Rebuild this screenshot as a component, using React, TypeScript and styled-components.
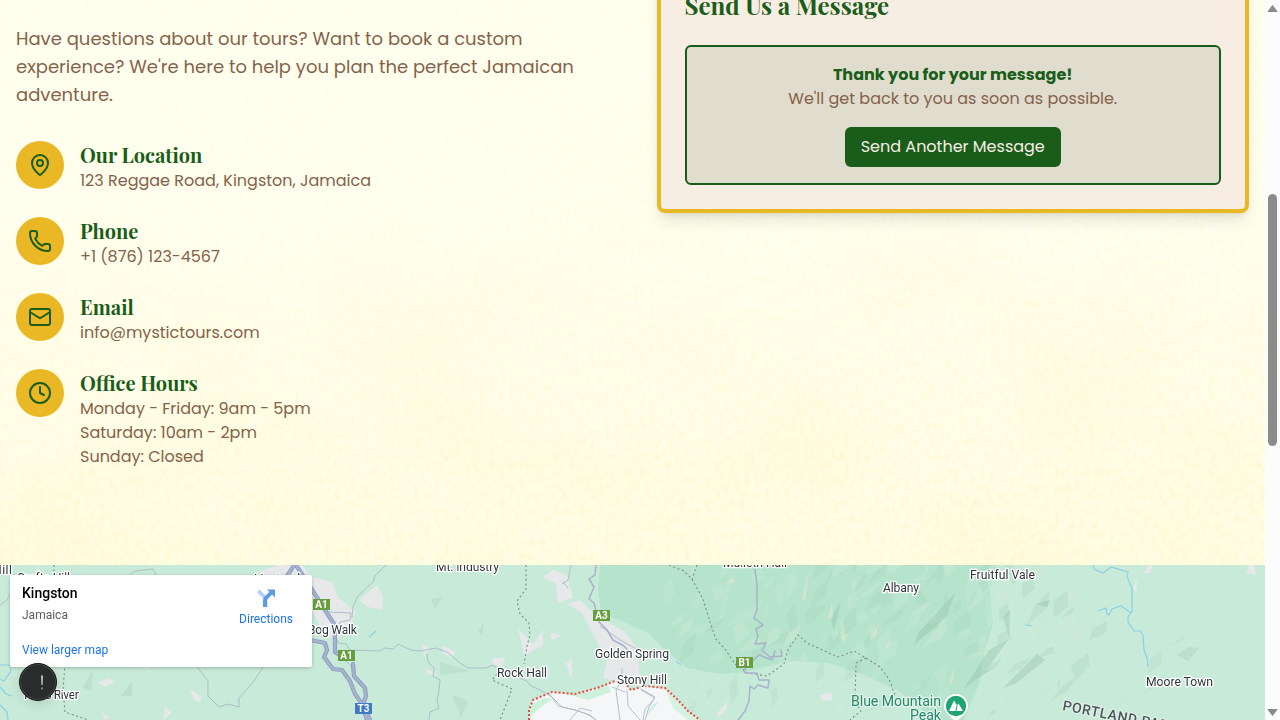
import React from "react";
import styled, { createGlobalStyle } from "styled-components";
import { Clock, Mail, MapPin, Phone } from "lucide-react";

const colors = {
  green: "#1a5d1a",
  gold: "#e9b824",
  brown: "#85624a",
  sand: "#f7ede3",
};

const GlobalStyle = createGlobalStyle`
  * { box-sizing: border-box; }
  body {
    margin: 0;
    overflow: hidden;
    font-family: Poppins, Inter, sans-serif;
    font-size: 16px;
    line-height: 24px;
    color: ${colors.brown};
  }
`;

const Window = styled.div`
  display: flex;
  width: 1280px;
  height: 720px;
  overflow: hidden;
`;

const Page = styled.main`
  display: flex;
  flex-direction: column;
  width: 1265px;
`;

const ContactSection = styled.section`
  position: relative;
  height: 565px;
  flex: none;
  padding: 0 16px;
  overflow: hidden;
  background: #fffff0;
`;

const Texture = styled.svg`
  position: absolute;
  inset: 0;
  width: 100%;
  height: 100%;
`;

const Columns = styled.div`
  position: relative;
  display: grid;
  grid-template-columns: 1fr 1fr;
  gap: 48px;
  align-items: start;
`;

const Details = styled.div`
  padding-top: 25px;
`;

const Intro = styled.p`
  margin: 0 0 32px;
  font-size: 18px;
  line-height: 28px;
`;

const Line = styled.span`
  display: block;
  white-space: nowrap;
`;

const ContactList = styled.div`
  display: flex;
  flex-direction: column;
  gap: 24px;
`;

const ContactItem = styled.div`
  display: flex;
  align-items: flex-start;
  gap: 16px;
`;

const IconDisc = styled.div`
  display: flex;
  align-items: center;
  justify-content: center;
  width: 48px;
  height: 48px;
  border-radius: 50%;
  background: ${colors.gold};
  color: ${colors.green};
`;

const ItemTitle = styled.h3`
  margin: 0;
  font-family: "Playfair Display", "Liberation Serif", serif;
  font-size: 20px;
  font-weight: 700;
  line-height: 28px;
  color: ${colors.green};
`;

const MessageCard = styled.div`
  margin-top: -39px;
  padding: 24px;
  border: 4px solid ${colors.gold};
  border-radius: 8px;
  background: ${colors.sand};
  box-shadow: 0 10px 15px -3px rgba(0, 0, 0, 0.1), 0 4px 6px -4px rgba(0, 0, 0, 0.1);
`;

const CardTitle = styled.h2`
  margin: 0 0 24px;
  font-family: "Playfair Display", "Liberation Serif", serif;
  font-size: 24px;
  font-weight: 700;
  line-height: 32px;
  color: ${colors.green};
`;

const Confirmation = styled.div`
  display: flex;
  flex-direction: column;
  align-items: center;
  padding: 16px;
  border: 2px solid ${colors.green};
  border-radius: 6px;
  background: rgba(26, 93, 26, 0.1);
`;

const Thanks = styled(Line)`
  font-weight: 700;
  color: ${colors.green};
`;

const SendButton = styled.button`
  height: 40px;
  margin-top: 16px;
  padding: 0 16px;
  border: 0;
  border-radius: 6px;
  background: ${colors.green};
  color: ${colors.sand};
  font: inherit;
`;

const MapSection = styled.section`
  position: relative;
  height: 155px;
  overflow: hidden;
  font-family: Roboto, sans-serif;
`;

const MapCanvas = styled.svg`
  display: block;
  font-family: Roboto, sans-serif;
`;

const PlaceCard = styled.div`
  position: absolute;
  left: 10px;
  top: 10px;
  display: flex;
  justify-content: space-between;
  width: 302px;
  height: 92px;
  padding: 9px 19px 9px 12px;
  border-radius: 2px;
  background: #fff;
  box-shadow: 0 1px 4px -1px rgba(0, 0, 0, 0.35);
`;

const PlaceText = styled.div`
  display: flex;
  flex-direction: column;
`;

const PlaceName = styled.div`
  font-size: 14px;
  font-weight: 500;
  line-height: 18px;
  color: #000;
`;

const PlaceRegion = styled.div`
  margin-top: 5px;
  font-size: 12px;
  line-height: 16px;
  color: #5b5b5b;
`;

const MapLink = styled.a`
  font-size: 12px;
  line-height: 16px;
  color: #1a73e8;
`;

const LargerMapLink = styled(MapLink)`
  margin-top: auto;
`;

const Directions = styled.div`
  display: flex;
  flex-direction: column;
  align-items: center;
  gap: 4px;
  padding-top: 5px;
`;

const AlertBubble = styled.div`
  position: absolute;
  left: 19px;
  top: 98px;
  display: flex;
  align-items: center;
  justify-content: center;
  width: 38px;
  height: 38px;
  padding-left: 8px;
  border: 1.5px solid #141615;
  border-radius: 50%;
  background: #292c2b;
  box-shadow: inset 0 0 0 1px #454847, 0 3px 12px rgba(0, 0, 0, 0.12);
`;

const Scrollbar = styled.div`
  display: flex;
  flex-direction: column;
  align-items: center;
  justify-content: space-between;
  width: 15px;
  height: 720px;
  padding: 5px 0 4px;
  background: #fcfcfc;
`;

const ScrollTrack = styled.div`
  flex: 1;
  padding-top: 182px;
`;

const ScrollThumb = styled.div`
  width: 9px;
  height: 252px;
  border-radius: 5px;
  background: #8b8b8b;
`;

const contacts = [
  { title: "Our Location", icon: MapPin, lines: ["123 Reggae Road, Kingston, Jamaica"] },
  { title: "Phone", icon: Phone, lines: ["+1 (876) 123-4567"] },
  { title: "Email", icon: Mail, lines: ["info@mystictours.com"] },
  {
    title: "Office Hours",
    icon: Clock,
    lines: ["Monday - Friday: 9am - 5pm", "Saturday: 10am - 2pm", "Sunday: Closed"],
  },
];

const PaperTexture = () => (
  <Texture aria-hidden="true">
    <defs>
      <filter id="grain" x="0" y="0" width="100%" height="100%" colorInterpolationFilters="sRGB">
        <feTurbulence type="fractalNoise" baseFrequency="0.2 0.13" numOctaves="3" seed="8" />
        <feColorMatrix values="0 0 0 0 0.98  0 0 0 0 0.93  0 0 0 0 0.66  1.5 0 0 0 -0.6" />
      </filter>
      <filter id="clouds" x="0" y="0" width="100%" height="100%" colorInterpolationFilters="sRGB">
        <feTurbulence type="fractalNoise" baseFrequency="0.006 0.008" numOctaves="3" seed="21" />
        <feColorMatrix values="0 0 0 0 0.99  0 0 0 0 0.96  0 0 0 0 0.75  1.5 0 0 0 -0.62" />
      </filter>
      <linearGradient id="fade" x1="0" y1="0" x2="0.2" y2="1">
        <stop offset="0" stopColor="#fff" stopOpacity="0.3" />
        <stop offset="0.4" stopColor="#fff" stopOpacity="0.4" />
        <stop offset="1" stopColor="#fff" stopOpacity="1" />
      </linearGradient>
      <linearGradient id="warm" x1="0" y1="0" x2="0" y2="1">
        <stop offset="0.35" stopColor="#fff6b8" stopOpacity="0" />
        <stop offset="1" stopColor="#fff6b8" stopOpacity="0.2" />
      </linearGradient>
      <mask id="grainMask">
        <rect width="100%" height="100%" fill="url(#fade)" />
      </mask>
    </defs>
    <rect width="100%" height="100%" fill="url(#warm)" />
    <g mask="url(#grainMask)">
      <rect width="100%" height="100%" filter="url(#clouds)" opacity="0.35" />
      <rect width="100%" height="100%" filter="url(#grain)" opacity="0.4" />
    </g>
  </Texture>
);

/* Small seeded generator so that the terrain facets are stable between renders. */
const facets = (seed: number, count: number, x0: number, x1: number, y0: number, y1: number) => {
  let s = seed;
  const next = () => {
    s = (s * 16807) % 2147483647;
    return s / 2147483647;
  };
  return Array.from({ length: count }, () => {
    const x = x0 + next() * (x1 - x0);
    const y = y0 + next() * (y1 - y0);
    const len = 12 + next() * 24;
    const wide = 2 + next() * 6;
    const a = -0.5 - next() * 1.0;
    const dx = Math.cos(a) * len;
    const dy = Math.sin(a) * len;
    const kind = Math.floor(next() * 4);
    return {
      d: `M${x} ${y}l${dx * 0.55 + wide} ${dy * 0.4}L${x + dx} ${y + dy}l${-wide - dx * 0.4} ${-dy * 0.3 + 1}z`,
      kind,
    };
  });
};

const shade = ["#d9edd9", "#a9d4bf", "#c9efdd", "#c6ecd9"];

const Terrain = () => (
  <>
    <path
      d="M600 565L598 590L601 614L620 620L648 633L662 647L687 668L720 674L745 672L790 661L828 663L862 674L897 690L925 712L943 720H964L979 684L985 650L993 623L990 590L997 565Z"
      fill="#b6e3cc"
    />
    <g opacity="0.32">
      {facets(71, 95, 665, 985, 572, 670).map((f, i) => (
        <path key={i} d={f.d} fill={shade[f.kind]} />
      ))}
    </g>
    <g opacity="0.32">
      {facets(913, 85, 975, 1090, 570, 725).map((f, i) => (
        <path key={i} d={f.d} fill={shade[f.kind]} />
      ))}
    </g>
    <g opacity="0.25">
      {facets(334, 34, 675, 940, 680, 725).map((f, i) => (
        <path key={i} d={f.d} fill={shade[f.kind]} />
      ))}
      {facets(51, 5, 1090, 1235, 590, 725).map((f, i) => (
        <path key={i} d={f.d} fill={shade[f.kind]} />
      ))}
    </g>
    <g fill="#93c4ad" opacity="0.42">
      <path d="M918 633L955 593L947 616L914 645Z" />
      <path d="M963 690L989 650L1008 640L985 672L995 666L974 681Z" />
      <path d="M1003 688L1037 654L1045 660L1015 684Z" />
      <path d="M1003 617L1010 610L1009 636Z" />
      <path d="M831 617L841 601L834 632Z" />
      <path d="M1036 604L1050 600L1047 607Z" />
      <path d="M1177 655L1189 647L1199 648L1188 661Z" opacity="0.6" />
      <path d="M431 599L443 597L435 609ZM478 632L484 622L482 635ZM452 695L468 701L461 718ZM440 662L470 671L440 675Z" opacity="0.5" />
      <path d="M83 688L93 670L91 690ZM121 696L132 682L132 696Z" opacity="0.6" />
    </g>
    <g fill="#e2e6d0" opacity="0.6">
      <path d="M802 598L809 571L805 602ZM828 620L832 601L833 617ZM841 638L844 624L845 641ZM884 652L892 632L888 648ZM871 636L880 622L875 637ZM949 682L955 665L952 684ZM725 584L732 577L735 582Z" />
    </g>
    <g fill="#e6e8ea">
      <path d="M255 573L278 565H302L312 577L332 582L338 597L356 612L351 625L338 639L325 637L312 610L290 577Z" />
      <path d="M359 600L377 585L383 597L382 610L368 607Z" />
      <path d="M543 577L553 570L567 575L573 598L558 603L556 584Z" />
      <path d="M567 604L580 600L594 614L601 611L608 622L625 632L637 648L641 686L603 678L607 660L597 642L582 613Z" />
      <path d="M518 628L533 645L543 629V645L524 656ZM550 633L563 635L552 640ZM492 659L505 657L503 666L493 665Z" />
      <path d="M97 683L108 678L115 682L105 687ZM190 689L202 697L200 702L194 700ZM165 706L172 713L163 720ZM101 712L110 718L105 720ZM142 666L148 667L149 670Z" />
      <path d="M422 643L430 649L424 656ZM443 645L455 652L452 658L442 653ZM426 668L438 675L428 674ZM566 663L572 658L572 679Z" />
      <path d="M717 713L728 701L726 710L718 718ZM820 695L832 693L832 700L823 701Z" />
      <path d="M1133 588L1138 576L1136 593ZM1144 573L1149 565H1153L1150 573ZM1246 573L1249 565H1254L1256 575Z" />
      <path d="M34 575L38 565L41 575Z" />
    </g>
  </>
);

const Roads = () => (
  <g fill="none" strokeLinejoin="round" strokeLinecap="round">
    <g stroke="#adbfca" strokeWidth="1">
      <path d="M386 565L375 576L373 582L358 596L353 607L352 618M326 612L351 613L350 620L340 622L336 636L338 643L346 644L350 650L380 651L384 648L393 649L398 644L411 650L420 651L436 648L447 652L460 663L468 668L486 668L493 665L503 672L527 681L531 686L540 690L552 697L562 707L575 710L590 715L596 720" />
      <path d="M427 654L428 662L434 668L433 676L440 680L439 690L437 700L439 708L430 712L429 720M340 655L351 666" />
      <path d="M195 664L208 681L208 696L219 707L228 704L239 707L239 698L254 681L263 667M130 575L135 571L153 569L156 575M0 605L7 600L10 594M571 565L568 580L562 584M622 669V680L616 690L620 720M641 689L655 697L649 707L645 720M600 626L620 640L635 648L640 656M563 582L568 588" />
    </g>
    <g stroke="#a9b2cc" strokeWidth="1.5">
      <path d="M596 565L595 575L589 579L594 587L589 599L594 603L597 615L599 622L607 630L613 640L624 646L632 655" />
      <path d="M755 569L757 586V610L754 618L763 625L756 629L758 637L755 644L766 643L762 650L770 657L782 656L781 650M775 651L772 660L759 655L748 665L744 671L745 673L757 673L759 680L769 680L768 688L758 685L754 689L750 686L749 701L745 711L738 720" />
    </g>
    <g stroke="#8e9dbf" strokeWidth="4.2">
      <path d="M297 561L287 576M296 565L309 585L325 610L334 624L335 640L335 652L341 656M353 664L354 676L365 688L366 696L363 705L370 720" />
      <path d="M310 640L325 643L327 650L324 657L333 669L342 670L350 681L355 694L362 704L367 720" />
    </g>
    <g stroke="#a6b3d0" strokeWidth="2.4">
      <path d="M297 561L287 576M296 565L309 585L325 610L334 624L335 640L335 652L341 656M353 664L354 676L365 688L366 696L363 705L370 720" />
      <path d="M310 640L325 643L327 650L324 657L333 669L342 670L350 681L355 694L362 704L367 720" />
    </g>
  </g>
);

const Water = () => (
  <g fill="none" stroke="#8dcfe5" strokeWidth="1.2">
    <path d="M1093 565L1094 569L1103 573L1111 567L1128 572L1127 577L1132 588L1132 611L1128 617L1128 622L1134 631L1140 631L1143 635L1144 650L1147 658L1148 667M1131 613L1121 606L1112 609L1109 615L1107 614L1106 608L1098 611" />
    <path d="M0 665L10 665L11 671L4 681L0 679M0 687L6 694L12 696M0 705L7 712L8 720M369 637L376 631M676 661L681 665M1025 625L1032 626" />
  </g>
);

const Boundaries = () => (
  <g fill="none" stroke="#7d8d85" strokeWidth="1.1" strokeDasharray="2 2.6">
    <path d="M526 565V589L517 601L520 614L529 623L530 635L527 646L524 664M497 674L492 680L512 689L500 720" />
    <path d="M669 565L684 571L692 579L703 599L711 625L716 639L725 649L735 664L748 673L767 676L784 664L788 650L798 635L807 643L838 657L854 651L866 658L880 667L889 679L896 698M697 565L692 579M866 658L856 663L855 700L861 711L850 720" />
    <path d="M65 664L63 690L65 712L88 720M54 565V573" />
  </g>
);

const City = () => (
  <g>
    <path d="M529 720V710L533 700L552 692L575 694L597 688L615 681L625 683L631 690L645 686L655 687L665 688L677 699L688 711L700 720Z" fill="#f5f6f8" />
    <path d="M529 720L531 704L545 698L553 699L545 704L535 712ZM563 693L588 700L611 692L608 684L590 692ZM645 718L659 702L653 704Z" fill="#ccf2dc" />
    <path d="M665 688L688 711L700 720H688L673 708Z" fill="#d5f3e0" />
    <g fill="none" stroke="#b6c3cf" strokeWidth="1">
      <path d="M549 693L558 706L575 710L587 714L596 720M627 690L628 706L640 720M570 720L580 708L592 711M641 690L655 698L645 709L643 720M612 687L625 692" />
    </g>
    <path
      d="M529 720V710L533 700L552 692L575 694L597 688L615 681L625 683L631 690L645 686L655 687L665 688L677 699L688 711L700 720"
      fill="none"
      stroke="#ea4a3c"
      strokeWidth="2"
      strokeDasharray="2 2"
    />
  </g>
);

const Place = ({ x, y, w, children }: { x: number; y: number; w: number; children: string }) => (
  <text
    x={x}
    y={y}
    textLength={w}
    fontSize="12.2"
    fill="#2e3438"
    stroke="#fff"
    strokeWidth="2.6"
    strokeLinejoin="round"
    paintOrder="stroke"
  >
    {children}
  </text>
);

const Shield = ({ x, y, color = "#689f3e", children }: { x: number; y: number; color?: string; children: string }) => (
  <g>
    <rect x={x} y={y} width="17" height="11" fill={color} />
    <text x={x + 8.5} y={y + 9.2} fontSize="10" fontWeight="700" fill="#fff" textAnchor="middle">
      {children}
    </text>
  </g>
);

const Labels = () => (
  <>
    <Place x={-7} y={574} w={19}>Hill</Place>
    <Place x={17} y={582} w={53}>Crofts Hill</Place>
    <Place x={254} y={583} w={46}>Linstead</Place>
    <Place x={436} y={571} w={63}>Mt. Industry</Place>
    <Place x={723} y={567} w={64}>Mulleth Hall</Place>
    <Place x={970} y={579} w={65}>Fruitful Vale</Place>
    <Place x={883} y={592} w={36}>Albany</Place>
    <Place x={308} y={634} w={49}>Bog Walk</Place>
    <Place x={595} y={658} w={74}>Golden Spring</Place>
    <Place x={617} y={684} w={50}>Stony Hill</Place>
    <Place x={497} y={677} w={50}>Rock Hall</Place>
    <Place x={1146} y={686} w={67}>Moore Town</Place>
    <Place x={22} y={699} w={57}>Toms River</Place>
    <Shield x={313} y={599}>A1</Shield>
    <Shield x={338} y={650}>A1</Shield>
    <Shield x={355} y={703} color="#4178c8">T3</Shield>
    <Shield x={593} y={610}>A3</Shield>
    <Shield x={736} y={657}>B1</Shield>
    <g fill="#26876a" stroke="#e4f5ec" strokeWidth="2.4" strokeLinejoin="round" paintOrder="stroke" fontSize="14.2">
      <text x="851" y="706" textLength="90">Blue Mountain</text>
      <text x="910" y="720" textLength="31">Peak</text>
    </g>
    <text
      transform="translate(1062 710) rotate(11)"
      textLength="131"
      fontSize="14"
      fontWeight="500"
      fill="#4b565b"
      stroke="#e4f2ea"
      strokeWidth="2.2"
      paintOrder="stroke"
    >
      PORTLAND PARISH
    </text>
    <g>
      <path d="M944 706A12 12 0 1 1 968 706C968 713 961 717 956 722C951 717 944 713 944 706Z" fill="#fff" />
      <circle cx="956" cy="706" r="10.2" fill="#1ea672" />
      <path d="M949 711L954 700.5L957 705.5L958.5 703.5L963 711Z" fill="#fff" />
      <path d="M957 705.5L956 711" stroke="#1ea672" strokeWidth="1" />
    </g>
  </>
);

const DirectionsIcon = () => (
  <svg width="18" height="18" viewBox="0 0 18 18" aria-hidden="true">
    <path d="M0 3.2L2.6 .6L10 8L7.4 10.6Z" fill="#b3d0f6" />
    <path d="M6 18V11.4Q6 9.2 7.6 7.6L12.4 2.8L10 .4H18V8.4L15.2 5.6L11 9.8Q10.2 10.6 10.2 11.7V18Z" fill="#5c9ae8" />
  </svg>
);

const AlertMark = () => (
  <svg width="4" height="15" viewBox="0 0 4 15" aria-hidden="true">
    <path d="M1 0.5H3L2.6 10H1.4Z" fill="#c3c6c5" />
    <rect x="1.1" y="12.4" width="1.8" height="1.8" fill="#8b8f8d" />
  </svg>
);

export default function App() {
  return (
    <>
      <GlobalStyle />
      <Window>
        <Page>
          <ContactSection>
            <PaperTexture />
            <Columns>
              <Details>
                <Intro>
                  <Line>Have questions about our tours? Want to book a custom</Line>
                  <Line>experience? We're here to help you plan the perfect Jamaican</Line>
                  <Line>adventure.</Line>
                </Intro>
                <ContactList>
                  {contacts.map(({ title, icon: Icon, lines }) => (
                    <ContactItem key={title}>
                      <IconDisc>
                        <Icon size={24} strokeWidth={2} />
                      </IconDisc>
                      <div>
                        <ItemTitle>{title}</ItemTitle>
                        {lines.map((text) => (
                          <Line key={text}>{text}</Line>
                        ))}
                      </div>
                    </ContactItem>
                  ))}
                </ContactList>
              </Details>
              <MessageCard>
                <CardTitle>Send Us a Message</CardTitle>
                <Confirmation>
                  <Thanks>Thank you for your message!</Thanks>
                  <Line>We'll get back to you as soon as possible.</Line>
                  <SendButton type="button">Send Another Message</SendButton>
                </Confirmation>
              </MessageCard>
            </Columns>
          </ContactSection>
          <MapSection>
            <MapCanvas width="1265" height="155" viewBox="0 565 1265 155">
              <rect y="565" width="1265" height="155" fill="#c8ead8" />
              <Terrain />
              <Water />
              <Boundaries />
              <City />
              <Roads />
              <Labels />
            </MapCanvas>
            <PlaceCard>
              <PlaceText>
                <PlaceName>Kingston</PlaceName>
                <PlaceRegion>Jamaica</PlaceRegion>
                <LargerMapLink>View larger map</LargerMapLink>
              </PlaceText>
              <Directions>
                <DirectionsIcon />
                <MapLink>Directions</MapLink>
              </Directions>
            </PlaceCard>
            <AlertBubble>
              <AlertMark />
            </AlertBubble>
          </MapSection>
        </Page>
        <Scrollbar>
          <svg width="11" height="7" viewBox="0 0 11 7">
            <path d="M5.5 .5L10 6.5H1Z" fill="#8b8b8b" stroke="#8b8b8b" strokeLinejoin="round" />
          </svg>
          <ScrollTrack>
            <ScrollThumb />
          </ScrollTrack>
          <svg width="11" height="7" viewBox="0 0 11 7">
            <path d="M5.5 6.5L10 .5H1Z" fill="#8b8b8b" stroke="#8b8b8b" strokeLinejoin="round" />
          </svg>
        </Scrollbar>
      </Window>
    </>
  );
}
